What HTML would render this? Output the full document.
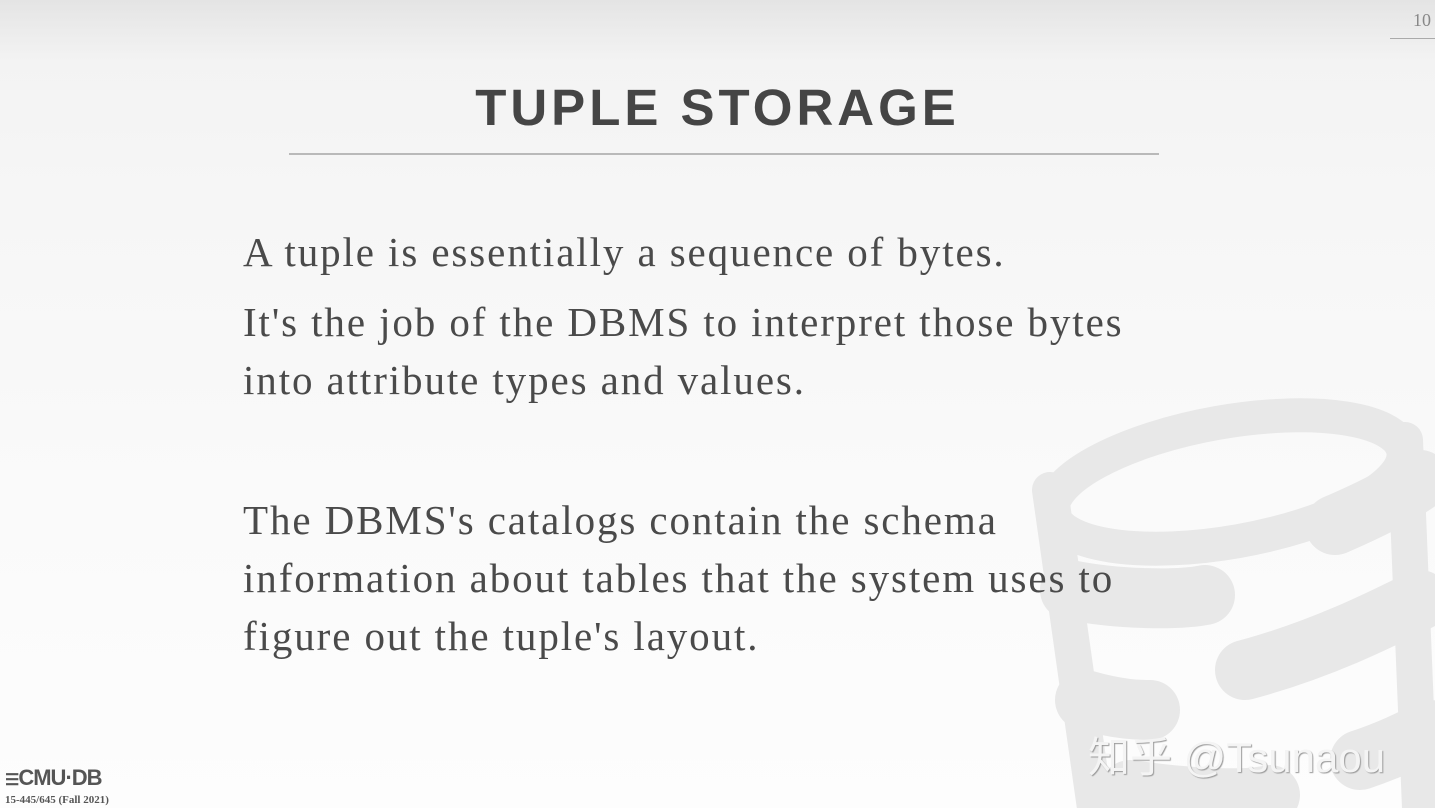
<!DOCTYPE html>
<html><head><meta charset="utf-8"><style>
html,body{margin:0;padding:0}
body{width:1435px;height:808px;position:relative;overflow:hidden;background:linear-gradient(#e4e4e4 0px,#f3f3f3 60px,#f6f6f6 200px,#fafafa 500px,#fdfdfd 808px);font-family:"Liberation Serif",serif}
.t{position:absolute;left:0;width:1435px;top:78px;text-align:center;font-family:"Liberation Sans",sans-serif;font-weight:bold;font-size:51px;letter-spacing:4px;color:#454545}
.hr{position:absolute;left:289px;top:153px;width:870px;height:2px;background:#b9b9b9}
.p{position:absolute;left:243px;font-size:41px;color:#4a4a4a;line-height:58px;letter-spacing:1.9px;white-space:nowrap}
.num{position:absolute;right:4px;top:10px;font-size:18px;color:#888}
.num:after{content:"";position:absolute;right:-4px;top:28px;width:45px;height:1px;background:#aaa}
</style></head><body>
<svg style="position:absolute;left:0;top:0" width="1435" height="808">
<g fill="none" stroke="#e8e8e8" stroke-linecap="round">
<ellipse cx="1228" cy="482" rx="178" ry="60" transform="rotate(-10 1228 482)" stroke-width="34"/>
<path d="M1050 490 L1095 808" stroke-width="36"/>
<path d="M1405 440 L1420 808" stroke-width="36"/>
<path d="M1070 590 C1120 600 1180 600 1205 595" stroke-width="60"/>
<path d="M1335 525 C1370 510 1400 495 1420 480" stroke-width="60"/>
<path d="M1085 700 C1120 710 1140 710 1150 710" stroke-width="60"/>
<path d="M1245 670 C1320 650 1380 620 1420 600" stroke-width="60"/>
<path d="M1130 790 C1200 800 1250 800 1270 795" stroke-width="60"/>
<path d="M1360 760 C1390 750 1410 740 1430 730" stroke-width="60"/>
</g>
</svg>
<div class="num">10</div>
<div class="t">TUPLE STORAGE</div>
<div class="hr"></div>
<div class="p" style="top:223px">A tuple is essentially a sequence of bytes.</div>
<div class="p" style="top:293px">It's the job of the DBMS to interpret those bytes<br>into attribute types and values.</div>
<div class="p" style="top:491px">The DBMS's catalogs contain the schema<br>information about tables that the system uses to<br>figure out the tuple's layout.</div>
<div style="position:absolute;left:1088px;top:724px;font-family:'Liberation Sans','Noto Sans CJK SC',sans-serif;font-size:42px;color:#f4f4f4;text-shadow:1px 1px 1px #999">知乎 @Tsunaou</div>
<div style="position:absolute;left:5px;top:765px;font-family:'Liberation Sans',sans-serif;font-size:22px;font-weight:bold;color:#555;letter-spacing:-1px"><span style="font-size:16px">☰</span>CMU·DB</div>
<div style="position:absolute;left:5px;top:794px;font-size:11px;font-weight:bold;color:#555">15-445/645 (Fall 2021)</div>
</body></html>
